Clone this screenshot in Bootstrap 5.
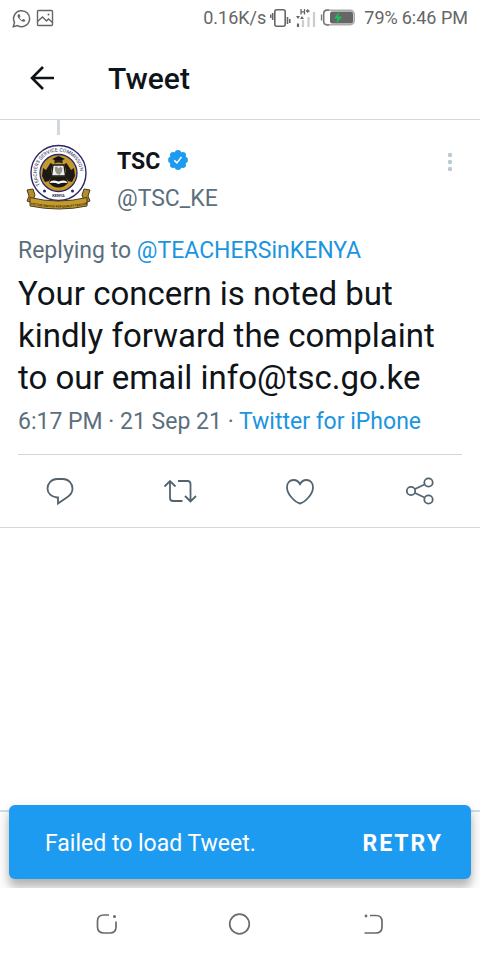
<!DOCTYPE html>
<html lang="en">
<head>
<meta charset="utf-8">
<meta name="viewport" content="width=device-width, initial-scale=1">
<title>Tweet</title>
<link href="https://cdn.jsdelivr.net/npm/bootstrap@5.3.0/dist/css/bootstrap.min.css" rel="stylesheet">
<style>
  body { font-family: Roboto, "Noto Sans", sans-serif; color: #0f1419; background: #fff; font-size: 23px; line-height: 28px; }
  svg { display: block; flex: none; }
  a { color: #1b95e0; text-decoration: none; }
  .status-bar { height: 36px; padding: 0 12px; font-size: 18px; color: #666; }
  .app-bar { height: 84px; padding: 0 24px; border-bottom: 1px solid #cfd9de; }
  .app-title { font-size: 30px; line-height: 36px; font-weight: 500; margin-left: 48px; padding-top: 2px; }
  .icon-btn { border: 0; background: none; padding: 0; color: inherit; }
  .tweet { border-bottom: 1px solid #cfd9de; }
  .tweet-body { margin: 0 18px; padding-bottom: 18px; border-bottom: 1px solid #cfd9de; }
  .thread-line { width: 3px; height: 15px; margin-left: 39px; background: #cfd9de; }
  .who { margin-left: 15px; padding-top: 13px; }
  .who-name { font-weight: 700; margin-bottom: 9px; }
  .author { min-height: 102px; }
  .muted { color: #5b6f7c; }
  .tweet-text { font-size: 33px; line-height: 42px; margin: 8px 0 9px; }
  .tweet-actions { height: 72px; color: #536471; }
  .menu-btn { padding: 17px 9px 0; color: #b9cad3; }
  .reply-area { height: 78px; border-top: 2px solid #cfdde4; background: #fcfcfc; }
  .snackbar { left: 9px; right: 9px; bottom: 9px; min-height: 74px; padding: 3px 28px 0 36px; border-radius: 6px; background: #1d9bf0; color: #fff; box-shadow: 0 9px 9px rgba(0,0,0,.2), 0 3px 12px rgba(0,0,0,.14); }
  .retry { color: #fff; font-weight: 700; letter-spacing: 2px; }
  .system-nav { height: 72px; background: #fff; color: #6b6b6b; z-index: 2; padding: 0 40px; }
</style>
<script src="https://cdn.jsdelivr.net/npm/bootstrap@5.3.0/dist/js/bootstrap.bundle.min.js" defer></script>
</head>
<body class="d-flex flex-column min-vh-100">
<div class="status-bar d-flex align-items-center">
  <svg width="19" height="19" viewBox="0 0 19 19" fill="none" stroke="#666" stroke-width="1.500"><path d="M1.300 17.700l1.200-4.300A8 8 0 1 1 5.600 16.600z"/><path d="M6.200 5.200c-1.400 1-.5 3.300 1.300 5.100s4.200 3.200 5.700 1.700l.2-1-2.200-1.100-1.100 1.100C8.700 10.500 7.900 9.500 7.500 8.400l1-.9-.9-2.200z" fill="#666" stroke="none"/></svg>
  <svg class="ms-1" width="20" height="18" viewBox="0 0 20 18" fill="none" stroke="#666" stroke-width="1.400"><rect x="2.500" y="1.500" width="15" height="15" rx="1"/><path d="M2.500 12.500l5-4.500 4 4 2-2 4 3.500"/><circle cx="13.500" cy="5.500" r="1" fill="#666" stroke="none"/></svg>
  <span class="ms-auto">0.16K/s</span>
  <svg class="ms-1" width="22" height="20" viewBox="0 0 22 20" fill="none" stroke="#666" stroke-width="1.600"><rect x="4.800" y="1.800" width="10.400" height="16.400" rx="2"/><path d="M2.700 5v7M.7 6.500v3.500M17.500 9v7M19.800 11v4"/></svg>
  <svg class="ms-1" width="20" height="20" viewBox="0 0 20 20"><path d="M12.500 9v10M18 4v15" stroke="#ccc" stroke-width="2.200"/><path d="M7 12v7" stroke="#ccc" stroke-width="2.200"/><path d="M2 15.500V19" stroke="#666" stroke-width="2.200"/><path d="M5 1v5.500M8.500 1v5.500M5 3.800h3.500M10 3h3.500M11.700 1.300v3.500" stroke="#666" stroke-width="1.300"/><path d="M0 8h4l-2 3zM4 11h4l-2-3z" fill="#666"/></svg>
  <svg class="ms-1" width="36" height="18" viewBox="0 0 36 18"><rect x="3.800" y="1.300" width="30.400" height="14.400" rx="4" fill="#fff" stroke="#aaa" stroke-width="1.600"/><path d="M9 1H7q-3.500 0-3.500 4v7q0 4 3.500 4h2M1.500 5.500v6" fill="none" stroke="#777" stroke-width="1.300"/><rect x="10" y="2.500" width="23" height="12" rx="2" fill="#666"/><path d="M19.500 2.500L14 9.500h3.500L16 15 22 7.500h-4z" fill="#14c45c"/></svg>
  <span class="ms-2">79%</span><span class="ms-1">6:46 PM</span>
</div>
<header class="app-bar d-flex align-items-center">
  <button class="icon-btn" type="button" aria-label="Back"><svg width="36" height="30" viewBox="0 0 36 30" fill="none" stroke="#0f1419" stroke-width="2.600"><path d="M30 15H8M19 4L8 15l11 11"/></svg></button>
  <h1 class="app-title mb-0">Tweet</h1>
</header>
<main class="flex-grow-1 d-flex flex-column position-relative overflow-hidden">
  <article class="tweet">
    <div class="tweet-body">
      <div class="thread-line"></div>
      <div class="author d-flex align-items-start">
        <svg width="84" height="84" viewBox="0 0 84 84" role="img" aria-label="Teachers Service Commission Kenya">
          <defs><path id="ring" d="M23.500 51.500A21.600 21.600 0 1 1 59.500 48.200"/><path id="ribbon" d="M12 69.500q28.500 6 57 0"/></defs>
          <circle cx="40.500" cy="38" r="27.500" fill="#fff" stroke="#2c2865" stroke-width="1.400"/>
          <circle cx="40.500" cy="38" r="18.500" fill="#c49a2d" stroke="#2c2865" stroke-width="1.300"/>
          <path d="M31 48q1-3 2-6.500h15q1 3.500 2 6.500-4 4.500-9.500 4.500T31 48z" fill="#1a1814"/>
          <path d="M25 33l3 2 4.500-7 2 1-1.500 8 1.500 3-3.500 6-4 1-3-6zM56 33l-3 2-4.500-7-2 1 1.500 8-1.500 3 3.500 6 4 1 3-6z" fill="#1d1a15"/>
          <path d="M35 30h11l1.500 11h-14z" fill="#eeeee8" stroke="#1a1a1a" stroke-width="1.300"/>
          <path d="M37 32l2-.5 1.500 2 2-2 2 2-.5 3-2.500 3.500-3-1.500-1.500-3z" fill="#96968f"/>
          <path d="M34 24l6.500-3 6.500 3-6.500 2.500z" fill="#111"/><path d="M36.500 25v3.500q4-2 8 0V25" fill="#222"/>
          <path d="M31.500 48q1.500-4 9-1.500 7.500-2.500 9 1.500-5-1-9 1-4-2-9-1z" fill="#fff"/>
          <circle cx="26.500" cy="56" r="1.500" fill="#2c2865"/><circle cx="54.500" cy="56" r="1.500" fill="#2c2865"/>
          <text font-size="5" fill="#29264d"><textPath href="#ring" startOffset="2">TEACHERS SERVICE COMMISSION</textPath></text>
          <text x="40.500" y="62" font-size="4" fill="#29264d" font-weight="700" text-anchor="middle">KENYA</text>
          <path d="M9 55l6-1 2 6-3 8-5-2 2-5zM72 55l-6-1-2 6 3 8 5-2-2-5z" fill="#b58c2b" stroke="#4b3a1d" stroke-width="1"/>
          <path d="M12 62.500q28 7 57 0v8.500q-28 6-57 0z" fill="#c49a2d" stroke="#4b3a1d" stroke-width="1"/>
          <text font-size="3" font-weight="700" fill="#2d2412"><textPath href="#ribbon" startOffset="50%" text-anchor="middle">EFFECTIVE SERVICE FOR QUALITY TEACHING</textPath></text>
        </svg>
        <div class="who">
          <div class="who-name d-flex align-items-center">TSC
            <svg class="ms-2 mb-1" width="20" height="20" viewBox="0 0 20 20" role="img" aria-label="Verified"><g fill="#1d9bf0"><circle cx="10" cy="10" r="7.800"/><circle cx="10" cy="3.300" r="3.200"/><circle cx="10" cy="16.700" r="3.200"/><circle cx="3.300" cy="10" r="3.200"/><circle cx="16.700" cy="10" r="3.200"/><circle cx="5.200" cy="5.200" r="3.200"/><circle cx="14.800" cy="5.200" r="3.200"/><circle cx="5.200" cy="14.800" r="3.200"/><circle cx="14.800" cy="14.800" r="3.200"/></g><path d="M6.300 10.400l2.600 2.500 4.600-6" fill="none" stroke="#fff" stroke-width="1.500"/></svg>
          </div>
          <div class="muted">@TSC_KE</div>
        </div>
        <button class="icon-btn menu-btn ms-auto" type="button" aria-label="More options"><svg width="6" height="20" viewBox="0 0 6 20" fill="currentColor"><circle cx="3" cy="3" r="2.200"/><circle cx="3" cy="10" r="2.200"/><circle cx="3" cy="17" r="2.200"/></svg></button>
      </div>
      <div class="muted">Replying to <a href="#">@TEACHERSinKENYA</a></div>
      <p class="tweet-text">Your concern is noted but kindly forward the complaint to our email info@tsc.go.ke</p>
      <div class="muted">6:17 PM · 21 Sep 21 · <a href="#">Twitter for iPhone</a></div>
    </div>
    <div class="tweet-actions row row-cols-4 g-0 align-items-center">
      <div class="col"><button class="icon-btn d-block mx-auto" type="button" aria-label="Reply"><svg width="34" height="30" viewBox="0 0 34 30" fill="none" stroke="currentColor" stroke-width="1.800"><path d="M15 21.500H14C8.500 21 4.500 17.500 4.500 12.500S8.500 3 14 3h6c5.500 0 9.500 4.500 9.500 9.500 0 4-2 6.500-5 8.500L15 27.500z"/></svg></button></div>
      <div class="col"><button class="icon-btn d-block mx-auto" type="button" aria-label="Retweet"><svg width="34" height="30" viewBox="0 0 34 30" fill="none" stroke="currentColor" stroke-width="1.800"><path d="M1.500 10.500L7 5l5.500 5.500M7 5v17q0 3 3 3h9.500M15 5h9.500q3 0 3 3v17M22 20l5.500 5.500L33 20"/></svg></button></div>
      <div class="col"><button class="icon-btn d-block mx-auto" type="button" aria-label="Like"><svg width="34" height="30" viewBox="0 0 34 30" fill="none" stroke="currentColor" stroke-width="1.800" stroke-linejoin="round"><path d="M17 27.500C12.500 26.500 4 18.500 4 11.500 4 6.500 7 4 10.500 4 13.500 4 16 6 17 8.500 18 6 20.500 4 23.500 4 27 4 30 6.500 30 11.500c0 7-8.500 15-13 16z"/></svg></button></div>
      <div class="col"><button class="icon-btn d-block mx-auto" type="button" aria-label="Share"><svg width="34" height="30" viewBox="0 0 34 30" fill="none" stroke="currentColor" stroke-width="1.800"><circle cx="8" cy="15" r="4.200"/><circle cx="25.500" cy="6.500" r="4.200"/><circle cx="25.500" cy="23.500" r="4.200"/><path d="M12 13l9.500-4.500M12 17l9.500 4.500"/></svg></button></div>
    </div>
  </article>
  <div class="reply-area mt-auto"></div>
  <div class="snackbar position-absolute d-flex align-items-center justify-content-between" role="alert">
    <span>Failed to load Tweet.</span>
    <button class="icon-btn retry" type="button">RETRY</button>
  </div>
</main>
<nav class="system-nav row row-cols-3 g-0 align-items-center" aria-label="System">
  <div class="col"><button class="icon-btn d-block mx-auto" type="button" aria-label="Recent apps"><svg width="24" height="24" viewBox="0 0 24 24" fill="none" stroke="currentColor" stroke-width="1.700"><path d="M14 3H9Q2.500 3 2.500 9v6q0 6 6.500 6h6q6 0 6-6V9.500"/><circle cx="19.500" cy="4.500" r="1.500" fill="currentColor" stroke="none"/></svg></button></div>
  <div class="col"><button class="icon-btn d-block mx-auto" type="button" aria-label="Home"><svg width="24" height="24" viewBox="0 0 24 24" fill="none" stroke="currentColor" stroke-width="1.700"><circle cx="11.500" cy="12" r="9.800"/></svg></button></div>
  <div class="col"><button class="icon-btn d-block mx-auto" type="button" aria-label="Previous"><svg width="24" height="24" viewBox="0 0 24 24" fill="none" stroke="currentColor" stroke-width="1.700"><path d="M9 3.500h6q6 0 6 6V15q0 6-6 6H3.500"/><circle cx="5" cy="4" r="1.400" fill="currentColor" stroke="none"/></svg></button></div>
</nav>
</body>
</html>
